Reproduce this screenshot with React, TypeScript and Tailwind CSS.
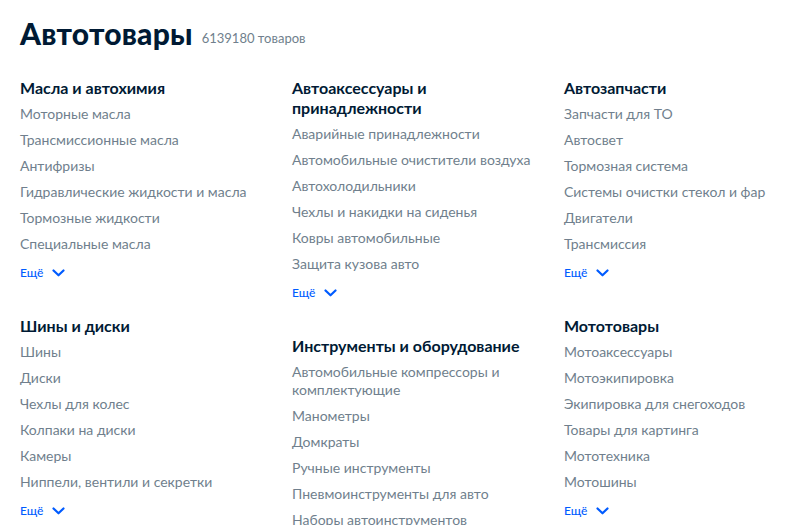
import React from "react";

type Section = { title: string; items: string[]; more?: boolean };

const columns: Section[][] = [
  [
    {
      title: "Масла и автохимия",
      items: [
        "Моторные масла",
        "Трансмиссионные масла",
        "Антифризы",
        "Гидравлические жидкости и масла",
        "Тормозные жидкости",
        "Специальные масла",
      ],
      more: true,
    },
    {
      title: "Шины и диски",
      items: [
        "Шины",
        "Диски",
        "Чехлы для колес",
        "Колпаки на диски",
        "Камеры",
        "Ниппели, вентили и секретки",
      ],
      more: true,
    },
  ],
  [
    {
      title: "Автоаксессуары и принадлежности",
      items: [
        "Аварийные принадлежности",
        "Автомобильные очистители воздуха",
        "Автохолодильники",
        "Чехлы и накидки на сиденья",
        "Ковры автомобильные",
        "Защита кузова авто",
      ],
      more: true,
    },
    {
      title: "Инструменты и оборудование",
      items: [
        "Автомобильные компрессоры и комплектующие",
        "Манометры",
        "Домкраты",
        "Ручные инструменты",
        "Пневмоинструменты для авто",
        "Наборы автоинструментов",
      ],
      more: true,
    },
  ],
  [
    {
      title: "Автозапчасти",
      items: [
        "Запчасти для ТО",
        "Автосвет",
        "Тормозная система",
        "Системы очистки стекол и фар",
        "Двигатели",
        "Трансмиссия",
      ],
      more: true,
    },
    {
      title: "Мототовары",
      items: [
        "Мотоаксессуары",
        "Мотоэкипировка",
        "Экипировка для снегоходов",
        "Товары для картинга",
        "Мототехника",
        "Мотошины",
      ],
      more: true,
    },
  ],
];

function Chevron() {
  return (
    <svg width="13" height="8" viewBox="0 0 13 8" fill="none">
      <path d="M1.5 1.5L6.5 6.3L11.5 1.5" stroke="#005bff" strokeWidth="2.2" strokeLinecap="round" strokeLinejoin="round" />
    </svg>
  );
}

function SectionBlock({ s }: { s: Section }) {
  return (
    <div className="flex flex-col">
      <h3 className="text-[16px] leading-[20px] font-bold text-[#001a34] mb-[7px]">{s.title}</h3>
      <ul className="flex flex-col gap-[8px]">
        {s.items.map((it) => (
          <li key={it} className="text-[14px] leading-[18px] text-[#707f8d]">
            {it}
          </li>
        ))}
      </ul>
      {s.more && (
        <div className="mt-[11px] flex items-center gap-[9px] text-[12px] leading-[18px] font-medium text-[#005bff]">
          <span>Ещё</span>
          <Chevron />
        </div>
      )}
    </div>
  );
}

export default function App() {
  return (
    <div className="w-[785px] h-[525px] overflow-hidden bg-white px-5 pt-[15px]" style={{ fontFamily: "Lato, 'Noto Sans', sans-serif" }}>
      <div className="flex items-baseline gap-[9px]">
        <h1 className="text-[30px] leading-[36px] font-black text-[#001a34] tracking-[0.2px]">Автотовары</h1>
        <span className="text-[13px] text-[#707f8d] relative top-[-2px]">6139180 товаров</span>
      </div>
      <div className="mt-[27px] grid grid-cols-[252px_252px_252px] gap-x-5">
        {columns.map((col, i) => (
          <div key={i} className="flex flex-col gap-[34px]">
            {col.map((s) => (
              <SectionBlock key={s.title} s={s} />
            ))}
          </div>
        ))}
      </div>
    </div>
  );
}
